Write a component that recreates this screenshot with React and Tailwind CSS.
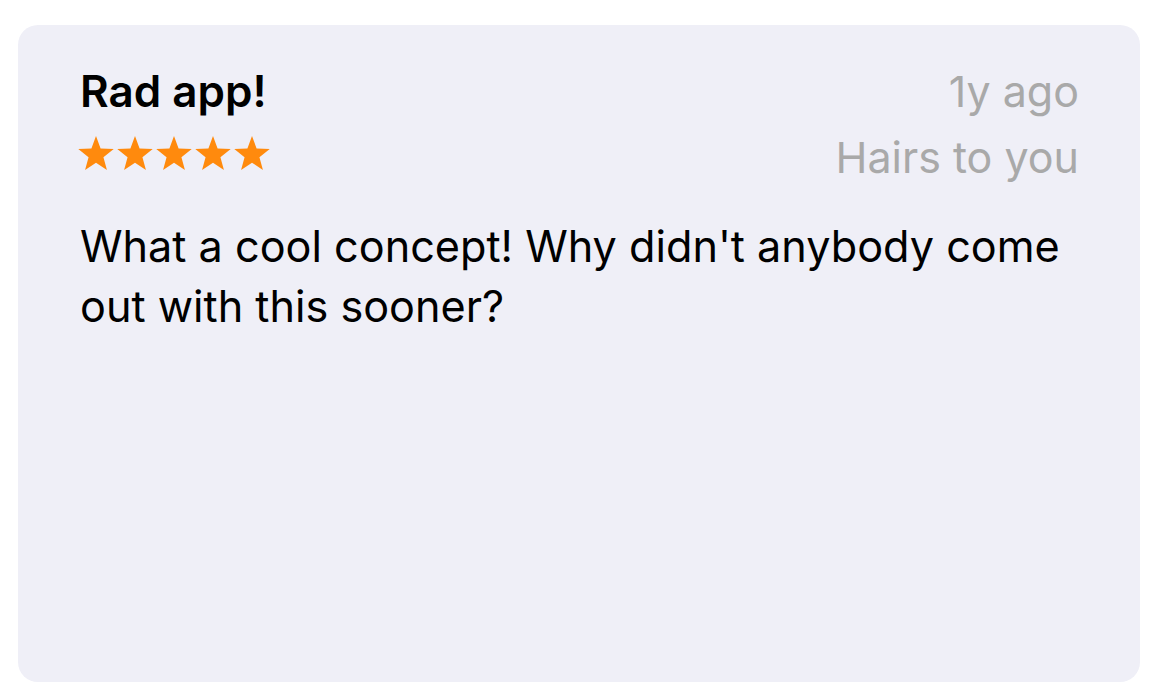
export default function App() {
  const Star = () => (
    <svg width="38" height="37" viewBox="0 0 24 23" className="block">
      <polygon
        points="12,0.5 14.9,8.3 23.2,8.6 16.7,13.8 18.9,21.9 12,17.3 5.1,21.9 7.3,13.8 0.8,8.6 9.1,8.3"
        fill="#ff8a0d"
      />
    </svg>
  );
  return (
    <div className="w-[1164px] h-[688px] bg-white pt-[25px] pl-[18px]" style={{ fontFamily: 'Inter, "Liberation Sans", sans-serif' }}>
      <div className="w-[1122px] h-[657px] rounded-[20px] bg-[#efeff7] px-[62px] pt-[33px]">
        <div className="flex justify-between">
          <div className="flex flex-col">
            <div className="text-[44px] leading-[66px] font-semibold text-black">Rad app!</div>
            <div className="flex gap-[1px] mt-[11px] ml-[-3px]">
              <Star />
              <Star />
              <Star />
              <Star />
              <Star />
            </div>
          </div>
          <div className="flex flex-col items-end text-[#a9a9a9] text-[43px] leading-[66px] mr-[-1px]">
            <div>1y ago</div>
            <div>Hairs to you</div>
          </div>
        </div>
        <p className="mt-[26px] text-[43.2px] leading-[60px] text-black">
          What a cool concept! Why didn't anybody come out with this sooner?
        </p>
      </div>
    </div>
  );
}
